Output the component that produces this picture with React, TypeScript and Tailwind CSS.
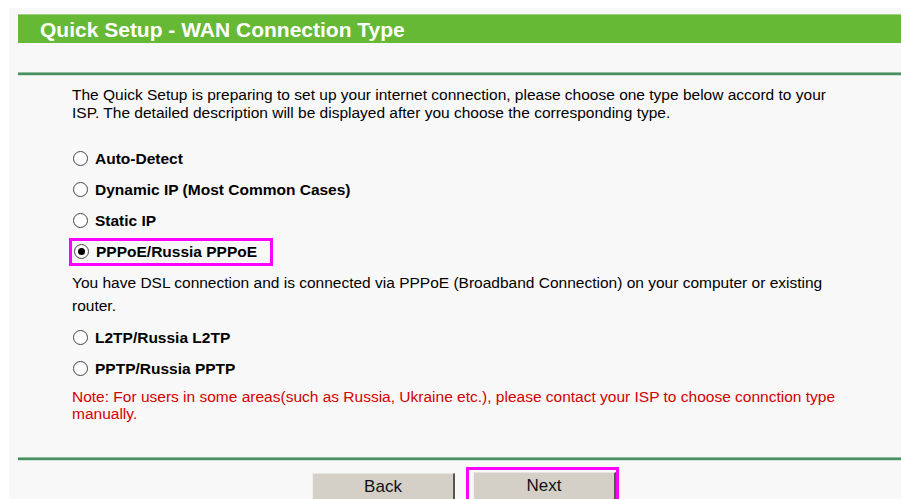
const font = { fontFamily: '"Liberation Sans", Arial, sans-serif' }

type Opt = { id: string; label: string }

const OPTIONS_TOP: Opt[] = [
  { id: "auto", label: "Auto-Detect" },
  { id: "dynamic", label: "Dynamic IP (Most Common Cases)" },
  { id: "static", label: "Static IP" },
]

const OPTIONS_BOTTOM: Opt[] = [
  { id: "l2tp", label: "L2TP/Russia L2TP" },
  { id: "pptp", label: "PPTP/Russia PPTP" },
]

function Radio({ checked }: { checked?: boolean }) {
  return (
    <span className="w-[15px] h-[15px] rounded-full border-[1.5px] border-[#444] bg-white flex items-center justify-center shrink-0">
      {checked && <span className="w-[7px] h-[7px] rounded-full bg-black" />}
    </span>
  )
}

function RadioRow({ label, checked }: { label: string; checked?: boolean }) {
  return (
    <div className="h-[31px] flex items-center">
      <div className="flex items-center gap-[7px] pl-[1px]">
        <Radio checked={checked} />
        <span className="text-[15.5px] font-bold text-black">{label}</span>
      </div>
    </div>
  )
}

function Divider() {
  return (
    <div>
      <div className="h-[1px] bg-[#8fbf9f]" />
      <div className="h-[2px] bg-[#4a8f62]" />
      <div className="h-[1px] bg-[#cfe5d6]" />
    </div>
  )
}

function Btn({ label }: { label: string }) {
  return (
    <button className="w-[143px] h-[30px] bg-[#d4d0c8] border-t border-l border-t-[#e8e6e2] border-l-[#f2f0ec] border-r-2 border-b-2 border-r-[#555] border-b-[#404040] text-[17px] text-[#111] leading-none pb-[2px]">
      {label}
    </button>
  )
}

export default function App() {
  return (
    <div className="w-[901px] h-[499px] overflow-hidden bg-white pt-[8px] pl-[9px]" style={font}>
      <div className="h-full bg-[#f8f8f8] pl-[9px] pt-[6px]">
        {/* title bar */}
        <div className="h-[29px] bg-[#66b935] border-t border-[#9fd27f] flex items-center pl-[22px]">
          <span className="text-white font-bold text-[21px] leading-none">Quick Setup - WAN Connection Type</span>
        </div>

        <div className="h-[29px]" />
        <Divider />

        <div className="pl-[54px] text-[15.5px] text-black">
          <p className="mt-[10px] leading-[18px] whitespace-nowrap">
            The Quick Setup is preparing to set up your internet connection, please choose one type below accord to your
            <br />
            ISP. The detailed description will be displayed after you choose the corresponding type.
          </p>

          <div className="mt-[21px] flex flex-col">
            {OPTIONS_TOP.map((o) => (
              <RadioRow key={o.id} label={o.label} />
            ))}
            <div className="h-[31px] flex items-center">
              <div className="h-[28px] w-[204px] -ml-[3px] border-[3px] border-[#ff00ff] flex items-center gap-[7px] pl-[2px]">
                <Radio checked />
                <span className="text-[15.5px] font-bold text-black">PPPoE/Russia PPPoE</span>
              </div>
            </div>
          </div>

          <p className="mt-[4px] leading-[23px] whitespace-nowrap">
            You have DSL connection and is connected via PPPoE (Broadband Connection) on your computer or existing
            <br />
            router.
          </p>

          <div className="mt-[5px] flex flex-col">
            {OPTIONS_BOTTOM.map((o) => (
              <RadioRow key={o.id} label={o.label} />
            ))}
          </div>

          <p className="mt-[4px] leading-[17px] text-[#d40000] whitespace-nowrap">
            Note: For users in some areas(such as Russia, Ukraine etc.), please contact your ISP to choose connction type
            <br />
            manually.
          </p>
        </div>

        <div className="mt-[35px]">
          <Divider />
        </div>

        <div className="flex items-start pl-[294px] pt-[6px]">
          <div className="mt-[6px]">
            <Btn label="Back" />
          </div>
          <div className="ml-[11px] border-[3px] border-[#ff00ff] pt-[2px] pl-[4px]">
            <Btn label="Next" />
          </div>
        </div>
      </div>
    </div>
  )
}
